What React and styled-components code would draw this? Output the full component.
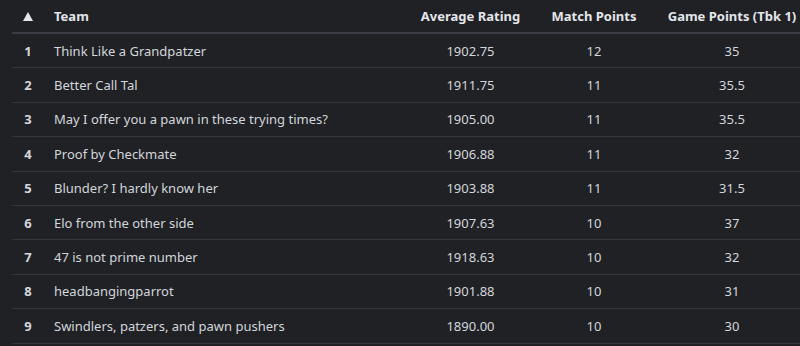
import React from "react";
import styled, { createGlobalStyle } from "styled-components";

const GlobalStyle = createGlobalStyle`
    html, body {
        margin: 0;
        padding: 0;
        background: #1f2125;
        overflow: hidden;
    }
    body {
        font-family: "Noto Sans", "Open Sans", sans-serif;
    }
`;

const Wrapper = styled.div`
    width: 800px;
    height: 346px;
    padding-left: 12px;
    box-sizing: border-box;
    overflow: hidden;
`;

const Table = styled.table`
    width: 795px;
    border-collapse: collapse;
    table-layout: fixed;
    font-size: 13px;
`;

const HeadCell = styled.th`
    height: 32px;
    padding: 0 0 0 ${(p) => (p.$left ? "10px" : "0")};
    text-align: ${(p) => (p.$left ? "left" : "center")};
    font-weight: 700;
    color: #e4e6ea;
    border-bottom: 2px solid #3a3d43;
    white-space: nowrap;
`;

const Row = styled.tr`
    border-bottom: 1px solid #33363c;
`;

const Cell = styled.td`
    height: 33.4px;
    padding: 0 0 0 ${(p) => (p.$left ? "10px" : "0")};
    text-align: ${(p) => (p.$left ? "left" : "center")};
    color: #d3d6db;
    font-weight: ${(p) => (p.$bold ? 700 : 400)};
    white-space: nowrap;
`;

const SortArrow = styled.svg`
    display: block;
    margin: 0 auto;
    width: 10px;
    height: 9px;
    fill: #e4e6ea;
`;

const teams = [
    ["Think Like a Grandpatzer", "1902.75", "12", "35"],
    ["Better Call Tal", "1911.75", "11", "35.5"],
    ["May I offer you a pawn in these trying times?", "1905.00", "11", "35.5"],
    ["Proof by Checkmate", "1906.88", "11", "32"],
    ["Blunder? I hardly know her", "1903.88", "11", "31.5"],
    ["Elo from the other side", "1907.63", "10", "37"],
    ["47 is not prime number", "1918.63", "10", "32"],
    ["headbangingparrot", "1901.88", "10", "31"],
    ["Swindlers, patzers, and pawn pushers", "1890.00", "10", "30"],
];

const App = () => {
    return (
        <Wrapper>
            <GlobalStyle />
            <Table>
                <colgroup>
                    <col style={{ width: 32 }} />
                    <col style={{ width: 366 }} />
                    <col style={{ width: 121 }} />
                    <col style={{ width: 126 }} />
                    <col style={{ width: 150 }} />
                </colgroup>
                <thead>
                    <tr>
                        <HeadCell>
                            <SortArrow viewBox="0 0 10 9">
                                <path d="M5 0 L10 9 L0 9 Z" />
                            </SortArrow>
                        </HeadCell>
                        <HeadCell $left>Team</HeadCell>
                        <HeadCell>Average Rating</HeadCell>
                        <HeadCell>Match Points</HeadCell>
                        <HeadCell>Game Points (Tbk 1)</HeadCell>
                    </tr>
                </thead>
                <tbody>
                    {teams.map((t, i) => (
                        <Row key={t[0]}>
                            <Cell $bold>{i + 1}</Cell>
                            <Cell $left>{t[0]}</Cell>
                            <Cell>{t[1]}</Cell>
                            <Cell>{t[2]}</Cell>
                            <Cell>{t[3]}</Cell>
                        </Row>
                    ))}
                </tbody>
            </Table>
        </Wrapper>
    );
};

export default App;
